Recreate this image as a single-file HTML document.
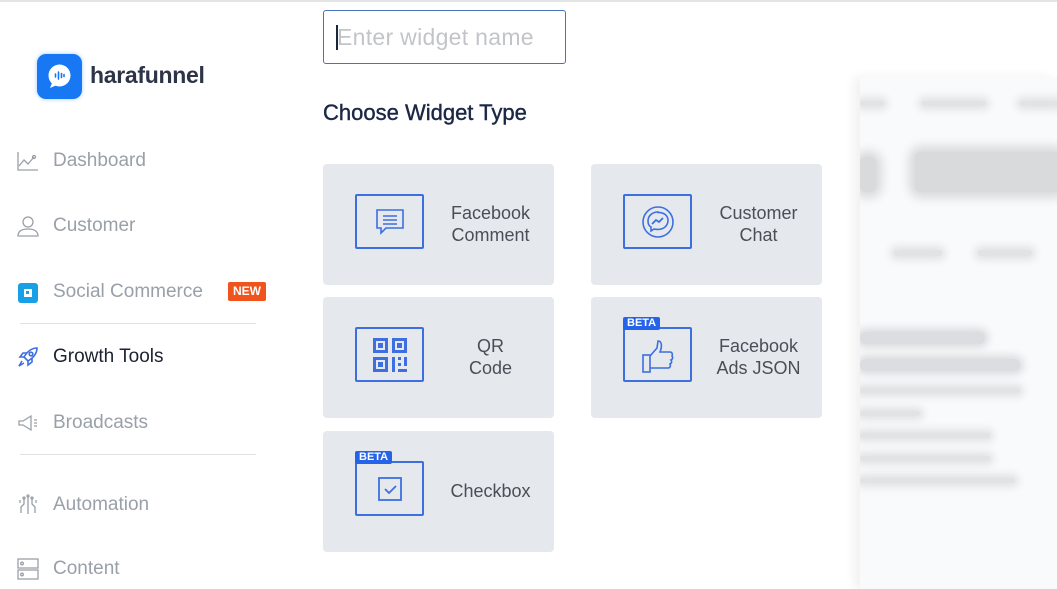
<!DOCTYPE html>
<html><head><meta charset="utf-8">
<style>
*{margin:0;padding:0;box-sizing:border-box}
body{width:1057px;height:589px;overflow:hidden;background:#fff;font-family:"Liberation Sans",sans-serif;position:relative}
.topline{position:absolute;left:0;top:0;width:1057px;height:2px;background:#e3e4e6}
.logo{position:absolute;left:37px;top:54px;width:45px;height:45px;border-radius:9px;background:#1877f2;box-shadow:0 0 4px rgba(24,119,242,.4)}
.brand{position:absolute;left:90px;top:62px;font-size:23px;font-weight:bold;color:#2d3448;letter-spacing:-0.3px}
.nav{position:absolute;left:53px;font-size:19px;color:#9aa0a8}
.ic{position:absolute;left:17px}
.sep{position:absolute;left:20px;width:236px;height:1px;background:#dfe1e4}
.new{position:absolute;left:228px;top:282px;width:38px;height:19px;background:#f0531c;color:#fff;font-size:12px;font-weight:bold;text-align:center;line-height:19px;border-radius:2px}
.input{position:absolute;left:323px;top:10px;width:243px;height:54px;border:1px solid #4a72b8;border-radius:3px}
.input span{position:absolute;left:13px;top:13px;font-size:23px;color:#c2c4c8;letter-spacing:0.3px}
.input i{position:absolute;left:12px;top:14px;width:2px;height:25px;background:#1a2540}
h2{position:absolute;left:323px;top:100px;font-size:22px;font-weight:normal;color:#1b2745;-webkit-text-stroke:0.4px #1b2745}
.card{position:absolute;width:231px;height:121px;background:#e5e9ee;border-radius:4px}
.box{position:absolute;left:32px;top:30px;width:69px;height:55px;border:2px solid #3d6fe0;border-radius:2px}
.box svg{position:absolute;left:50%;top:50%;transform:translate(-50%,-50%)}
.lbl{position:absolute;left:110px;width:115px;top:38px;text-align:center;font-size:18px;line-height:22px;color:#4a4f57}
.beta{position:absolute;left:-2px;top:-12px;background:#2563eb;color:#fff;font-size:11px;font-weight:bold;padding:0 4px;line-height:13px;border-radius:2px}
.right{position:absolute;left:860px;top:77px;width:197px;height:512px;background:#f9fafb;box-shadow:-6px 0 10px rgba(0,0,0,.06);overflow:hidden}
.bl{position:absolute;background:#e2e3e5;border-radius:6px;box-shadow:0 0 8px 4px #e2e3e5}
</style></head><body>
<div class="topline"></div>
<div class="logo"><svg width="45" height="45" viewBox="0 0 45 45"><circle cx="22.5" cy="21.5" r="11" fill="#fff"/><path d="M15 29 L13 34 L20 31 Z" fill="#fff"/><g stroke="#1877f2" stroke-width="1.6" stroke-linecap="round"><line x1="18.5" y1="20" x2="18.5" y2="23"/><line x1="21.5" y1="18" x2="21.5" y2="25"/><line x1="24.5" y1="19.5" x2="24.5" y2="23.5"/><line x1="27" y1="20.5" x2="27" y2="22.5"/></g></svg></div>
<div class="brand">harafunnel</div>

<svg class="ic" style="top:150px" width="22" height="22" viewBox="0 0 22 22" fill="none" stroke="#9aa0a8" stroke-width="1.3"><path d="M1 2v18h20"/><path d="M2 16l5-6 4 4 6-7"/><circle cx="17" cy="7" r="1.5"/></svg>
<div class="nav" style="top:150px">Dashboard</div>
<svg class="ic" style="top:215px" width="22" height="22" viewBox="0 0 22 22" fill="none" stroke="#9aa0a8" stroke-width="1.3"><circle cx="11" cy="7" r="5"/><path d="M1 21c0-5 4-7 10-7s10 2 10 7z"/></svg>
<div class="nav" style="top:215px">Customer</div>
<svg class="ic" style="top:282px" width="22" height="22" viewBox="0 0 22 22"><rect x="1" y="1" width="20" height="20" rx="3" fill="#18a0e6"/><rect x="7" y="7" width="8" height="8" fill="#fff"/><rect x="9" y="9" width="3" height="3" fill="#18a0e6"/></svg>
<div class="nav" style="top:281px">Social Commerce</div>
<div class="new">NEW</div>
<div class="sep" style="top:323px"></div>
<svg class="ic" style="top:346px" width="22" height="22" viewBox="0 0 22 22" fill="none" stroke="#3d6fe0" stroke-width="1.6"><path d="M20 2c-6 0-10 4-13 9l4 4c5-3 9-7 9-13z"/><circle cx="14" cy="8" r="1.8"/><path d="M7 11H3l3-4h4M11 15v4l4-3v-4M5 15l-3 5 5-3"/></svg>
<div class="nav" style="top:346px;color:#1b2230">Growth Tools</div>
<svg class="ic" style="top:412px" width="22" height="22" viewBox="0 0 22 22" fill="none" stroke="#9aa0a8" stroke-width="1.3"><path d="M2 9h4l8-5v14l-8-5H2z"/><path d="M17 8h3M17 11h3M17 14h3"/></svg>
<div class="nav" style="top:412px">Broadcasts</div>
<div class="sep" style="top:454px"></div>
<svg class="ic" style="top:494px" width="22" height="22" viewBox="0 0 22 22" fill="none" stroke="#9aa0a8" stroke-width="1.3"><path d="M11 2v18M7 4v6l-3 3v6M15 4v6l3 3v6M3 6v3M19 6v3"/><circle cx="11" cy="2" r="1"/><circle cx="7" cy="4" r="1"/><circle cx="15" cy="4" r="1"/></svg>
<div class="nav" style="top:494px">Automation</div>
<svg class="ic" style="top:558px" width="22" height="22" viewBox="0 0 22 22" fill="none" stroke="#9aa0a8" stroke-width="1.3"><rect x="1" y="1" width="20" height="9"/><rect x="1" y="12" width="20" height="9"/><circle cx="5" cy="5.5" r="1.3"/><circle cx="5" cy="16.5" r="1.3"/></svg>
<div class="nav" style="top:558px">Content</div>

<div class="input"><i></i><span>Enter widget name</span></div>
<h2>Choose Widget Type</h2>

<div class="card" style="left:323px;top:164px"><div class="box"><svg width="30" height="28" viewBox="0 0 30 28" fill="none" stroke="#3d6fe0" stroke-width="1.6"><path d="M2 2h26v18H11l-5 5v-5H2z"/><path d="M8 8h14M8 12h14M8 16h14"/></svg></div><div class="lbl">Facebook<br>Comment</div></div>
<div class="card" style="left:591px;top:164px"><div class="box"><svg width="34" height="34" viewBox="0 0 34 34" fill="none" stroke="#3d6fe0" stroke-width="1.6"><circle cx="17" cy="17" r="15"/><path d="M17 7c-6 0-10 4-10 9 0 3 1 5 3 6v4l3-2c1 .3 2 .4 4 .4 6 0 10-4 10-9s-4-8-10-8z"/><path d="M11 19l4-4 3 2 4-4" stroke-width="1.8"/></svg></div><div class="lbl">Customer<br>Chat</div></div>
<div class="card" style="left:323px;top:297px"><div class="box"><svg width="36" height="36" viewBox="0 0 36 36" fill="#3d6fe0"><path fill-rule="evenodd" d="M1 1h15v15H1zM4 4v9h9V4z"/><rect x="6" y="6" width="5" height="5"/><path fill-rule="evenodd" d="M20 1h15v15H20zM23 4v9h9V4z"/><rect x="25" y="6" width="5" height="5"/><path fill-rule="evenodd" d="M1 20h15v15H1zM4 23v9h9V23z"/><rect x="6" y="25" width="5" height="5"/><rect x="20" y="20" width="3" height="15"/><rect x="26" y="20" width="3" height="3"/><rect x="32" y="20" width="3" height="9"/><rect x="26" y="26" width="3" height="3"/><rect x="26" y="32" width="9" height="3"/></svg></div><div class="lbl">QR<br>Code</div></div>
<div class="card" style="left:591px;top:297px"><div class="box"><span class="beta">BETA</span><svg style="top:55%" width="34" height="34" viewBox="0 0 34 34" fill="none" stroke="#3d6fe0" stroke-width="1.6"><rect x="2" y="15" width="7" height="17"/><path d="M9 16l7-8 1-7c3 0 4 3 3 8l-1 3h10c2 0 3 2 2 4 1 1 1 3-1 4 1 1 1 3-1 4 1 2 0 4-2 4H9"/></svg></div><div class="lbl">Facebook<br>Ads JSON</div></div>
<div class="card" style="left:323px;top:431px"><div class="box"><span class="beta">BETA</span><svg width="24" height="24" viewBox="0 0 24 24" fill="none" stroke="#3d6fe0" stroke-width="1.8"><rect x="1" y="1" width="22" height="22"/><path d="M7 12l4 4 7-7"/></svg></div><div class="lbl" style="top:49px">Checkbox</div></div>

<div class="right">
<div class="bl" style="left:0;top:24px;width:24px;height:5px"></div>
<div class="bl" style="left:62px;top:24px;width:64px;height:5px"></div>
<div class="bl" style="left:160px;top:24px;width:40px;height:5px"></div>
<div class="bl" style="left:0;top:80px;width:16px;height:35px;background:#d9dadc;box-shadow:0 0 10px 6px #d9dadc"></div>
<div class="bl" style="left:55px;top:75px;width:145px;height:40px;background:#d9dadc;box-shadow:0 0 10px 6px #d9dadc"></div>
<div class="bl" style="left:34px;top:173px;width:48px;height:6px"></div>
<div class="bl" style="left:118px;top:173px;width:54px;height:6px"></div>
<div class="bl" style="left:0;top:255px;width:125px;height:12px;background:#dcdde0;box-shadow:0 0 8px 4px #dcdde0"></div>
<div class="bl" style="left:0;top:282px;width:160px;height:12px;background:#dcdde0;box-shadow:0 0 8px 4px #dcdde0"></div>
<div class="bl" style="left:0;top:311px;width:160px;height:5px"></div>
<div class="bl" style="left:0;top:334px;width:60px;height:5px"></div>
<div class="bl" style="left:0;top:356px;width:130px;height:5px"></div>
<div class="bl" style="left:0;top:379px;width:130px;height:5px"></div>
<div class="bl" style="left:0;top:401px;width:155px;height:5px"></div>
</div>
</body></html>
